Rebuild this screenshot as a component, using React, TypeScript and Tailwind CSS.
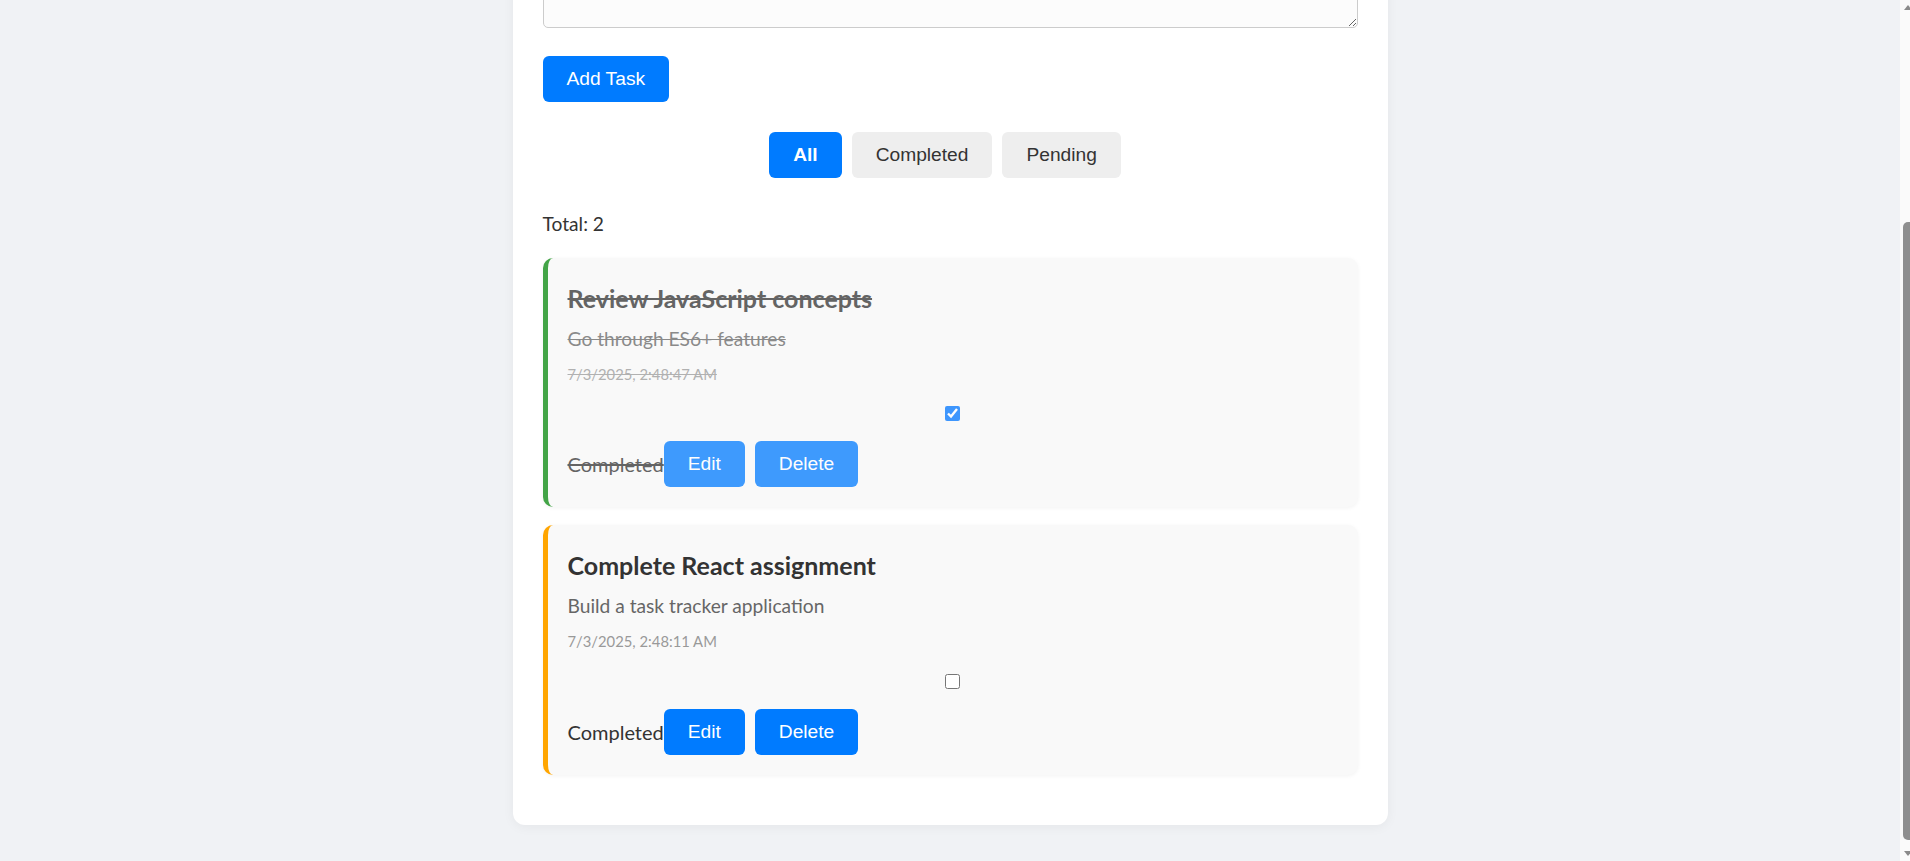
import { useEffect, useRef, useState } from "react";

type Task = {
  id: number;
  title: string;
  description: string;
  createdAt: string;
  completed: boolean;
};

const initialTasks: Task[] = [
  {
    id: 2,
    title: "Review JavaScript concepts",
    description: "Go through ES6+ features",
    createdAt: "7/3/2025, 2:48:47 AM",
    completed: true,
  },
  {
    id: 1,
    title: "Complete React assignment",
    description: "Build a task tracker application",
    createdAt: "7/3/2025, 2:48:11 AM",
    completed: false,
  },
];

const btn =
  "h-[46px] px-[24px] rounded-[6px] text-[19.2px] leading-[22px] font-['Liberation_Sans',Arial,sans-serif] cursor-pointer";

function TaskCard({ task, onToggle }: { task: Task; onToggle: () => void }) {
  const done = task.completed;
  return (
    <div
      className={`rounded-[10px] border-l-[5px] bg-[#f9f9f9] shadow-[0_1px_4px_rgba(0,0,0,0.05)] ${
        done ? "border-[#43a447]" : "border-[#ffa500]"
      }`}
    >
      <div className={`pl-[20px] pr-[20px] pt-[25px] pb-[20px] ${done ? "opacity-75" : ""}`}>
        <h3
          className={`text-[25px] leading-[30px] font-bold text-[#333] ${done ? "line-through" : ""}`}
        >
          {task.title}
        </h3>
        <p
          className={`mt-[12.6px] text-[19.2px] leading-[26px] text-[#666] ${done ? "line-through" : ""}`}
        >
          {task.description}
        </p>
        <p
          className={`mt-[12.4px] text-[14.8px] leading-[20px] text-[#999] ${done ? "line-through" : ""}`}
        >
          {task.createdAt}
        </p>
        <div className="mt-[22.5px] flex justify-center">
          <input
            type="checkbox"
            checked={done}
            onChange={onToggle}
            className="w-[15px] h-[15px] m-0"
          />
        </div>
        <div className="mt-[20px] flex items-center">
          <span
            className={`text-[20px] leading-[26px] text-[#333] ${done ? "line-through" : ""}`}
          >
            Completed
          </span>
          <button className={`${btn} mr-[10px] bg-[#007bff] text-white`}>Edit</button>
          <button className={`${btn} mr-[10px] bg-[#007bff] text-white`}>Delete</button>
        </div>
      </div>
    </div>
  );
}

// the window's own scrollbar is hidden in the screenshot browser, so draw the
// visible sliver of it (page is scrolled to the bottom)
function ScrollRail() {
  return (
    <div className="w-[10px] shrink-0 overflow-hidden bg-[#fafafa] flex flex-col">
      <div className="h-[15px] w-[15px] shrink-0 flex items-center justify-center">
        <svg width="8" height="5" viewBox="0 0 8 5">
          <path d="M4 0 L8 5 L0 5 Z" fill="#8a8a8a" />
        </svg>
      </div>
      <div className="mt-[207px] ml-[3px] w-[11px] h-[618px] shrink-0 rounded-[5px] bg-[#8f8f8f]" />
      <div className="mt-auto h-[15px] w-[15px] shrink-0 flex items-center justify-center">
        <svg width="8" height="5" viewBox="0 0 8 5">
          <path d="M0 0 L8 0 L4 5 Z" fill="#8a8a8a" />
        </svg>
      </div>
    </div>
  );
}

export default function App() {
  const [tasks, setTasks] = useState<Task[]>(initialTasks);
  const [filter, setFilter] = useState<"all" | "completed" | "pending">("all");
  const scroller = useRef<HTMLDivElement | null>(null);

  useEffect(() => {
    const el = scroller.current;
    if (!el) return;
    el.scrollTop = el.scrollHeight;
    requestAnimationFrame(() => {
      el.scrollTop = el.scrollHeight;
    });
  }, []);

  const shown = tasks.filter((t) =>
    filter === "all" ? true : filter === "completed" ? t.completed : !t.completed
  );

  const filterBtn = (key: "all" | "completed" | "pending", label: string) => (
    <button
      key={key}
      onClick={() => setFilter(key)}
      className={`${btn} mr-[10px] ${
        filter === key ? "bg-[#007bff] text-white font-bold" : "bg-[#eeeeee] text-[#333]"
      }`}
    >
      {label}
    </button>
  );

  return (
    <div className="flex h-screen bg-[#f0f2f5] font-[Lato,sans-serif] text-[#333]">
      <div
        ref={(el) => {
          scroller.current = el;
          if (el) el.scrollTop = el.scrollHeight;
        }}
        className="flex-1 overflow-y-scroll [scrollbar-width:none]"
      >
        <div className="pt-[38px] pb-[36px]">
          <div className="mx-auto w-[875px] rounded-[12px] bg-white px-[30px] pt-[30px] pb-[50.4px] shadow-[0_2px_12px_rgba(0,0,0,0.05)]">
            <h1 className="text-center text-[38.4px] leading-[46px] font-bold text-[#333]">
              Task Tracker
            </h1>
            <input
              type="text"
              placeholder="Task title"
              className="mt-[24px] block w-full h-[46px] rounded-[5px] border border-[#ccc] bg-[#fcfcfc] px-[12px] text-[19.2px] outline-none"
            />
            <textarea
              placeholder="Task description"
              rows={3}
              className="mt-[14px] block w-full h-[120px] rounded-[5px] border border-[#ccc] bg-[#fcfcfc] px-[12px] py-[10px] text-[19.2px] outline-none"
            />
            <button className={`${btn} mt-[28px] bg-[#007bff] text-white`}>Add Task</button>

            <div className="mt-[30px] flex justify-center">
              {filterBtn("all", "All")}
              {filterBtn("completed", "Completed")}
              {filterBtn("pending", "Pending")}
            </div>

            <p className="mt-[33.4px] text-[19.2px] leading-[26px] text-[#333]">
              Total: {shown.length}
            </p>

            <div className="mt-[20.6px] flex flex-col gap-[18px]">
              {shown.map((t) => (
                <TaskCard
                  key={t.id}
                  task={t}
                  onToggle={() =>
                    setTasks((prev) =>
                      prev.map((p) => (p.id === t.id ? { ...p, completed: !p.completed } : p))
                    )
                  }
                />
              ))}
            </div>
          </div>
        </div>
      </div>
      <ScrollRail />
    </div>
  );
}
